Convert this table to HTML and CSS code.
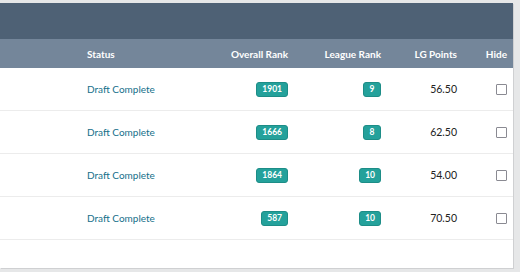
FILE: index.html
```html
<!DOCTYPE html>
<html>
<head>
<meta charset="utf-8">
<link rel="stylesheet" href="styles.css">
</head>
<body>
<div class="page">
  <div class="card">
    <div class="band"></div>
    <div class="row head">
      <div></div>
      <div class="c-status">Status</div>
      <div class="c-num">Overall Rank</div>
      <div class="c-num">League Rank</div>
      <div class="c-num">LG Points</div>
      <div class="c-num">Hide</div>
    </div>
    <div class="row">
      <div></div>
      <div class="c-status link">Draft Complete</div>
      <div class="c-num"><span class="badge">1901</span></div>
      <div class="c-num"><span class="badge">9</span></div>
      <div class="c-num">56.50</div>
      <div class="c-num"><span class="check"></span></div>
    </div>
    <div class="row">
      <div></div>
      <div class="c-status link">Draft Complete</div>
      <div class="c-num"><span class="badge">1666</span></div>
      <div class="c-num"><span class="badge">8</span></div>
      <div class="c-num">62.50</div>
      <div class="c-num"><span class="check"></span></div>
    </div>
    <div class="row">
      <div></div>
      <div class="c-status link">Draft Complete</div>
      <div class="c-num"><span class="badge">1864</span></div>
      <div class="c-num"><span class="badge">10</span></div>
      <div class="c-num">54.00</div>
      <div class="c-num"><span class="check"></span></div>
    </div>
    <div class="row">
      <div></div>
      <div class="c-status link">Draft Complete</div>
      <div class="c-num"><span class="badge">587</span></div>
      <div class="c-num"><span class="badge">10</span></div>
      <div class="c-num">70.50</div>
      <div class="c-num"><span class="check"></span></div>
    </div>
    <div class="filler"></div>
  </div>
</div>
</body>
</html>
```

FILE: styles.css
```css
html, body {
  margin: 0;
  padding: 0;
  background: #e6e7e8;
  font-family: Lato, "Open Sans", Arial, sans-serif;
  font-size: 10.5px;
  color: #222;
}
.page {
  width: 520px;
  height: 272px;
  padding-top: 3px;
  box-sizing: border-box;
  overflow: hidden;
}
.card {
  width: 513px;
  height: 265px;
  background: #fff;
  box-shadow: 1px 1px 0 #cfd0d2;
  display: flex;
  flex-direction: column;
}
.band {
  height: 36px;
  background: #4e6175;
  flex: none;
}
.row {
  display: grid;
  grid-template-columns: 87px 120px 81px 93px 76px 50px;
  padding-right: 6px;
  height: 42px;
  align-items: center;
  border-bottom: 1px solid #ececec;
  flex: none;
}
.row.head {
  height: 29px;
  background: #74869a;
  color: #fff;
  font-size: 10px;
  font-weight: 700;
  border-bottom: none;
}
.c-status { text-align: left; }
.c-num {
  display: flex;
  justify-content: flex-end;
  align-items: center;
}
.link {
  color: #15708a;
  font-size: 10px;
  font-weight: 400;
}
.badge {
  display: inline-block;
  background: #24a19b;
  border: 1px solid #1d8d87;
  color: #fff;
  font-weight: 700;
  font-size: 8.5px;
  line-height: 13px;
  padding: 0 5px;
  border-radius: 3px;
  min-width: 6px;
  text-align: center;
}
.check {
  display: inline-block;
  width: 9px;
  height: 9px;
  border: 1px solid #8a8a92;
  border-radius: 1px;
  background: #fff;
}
.filler { flex: 1; }
```
